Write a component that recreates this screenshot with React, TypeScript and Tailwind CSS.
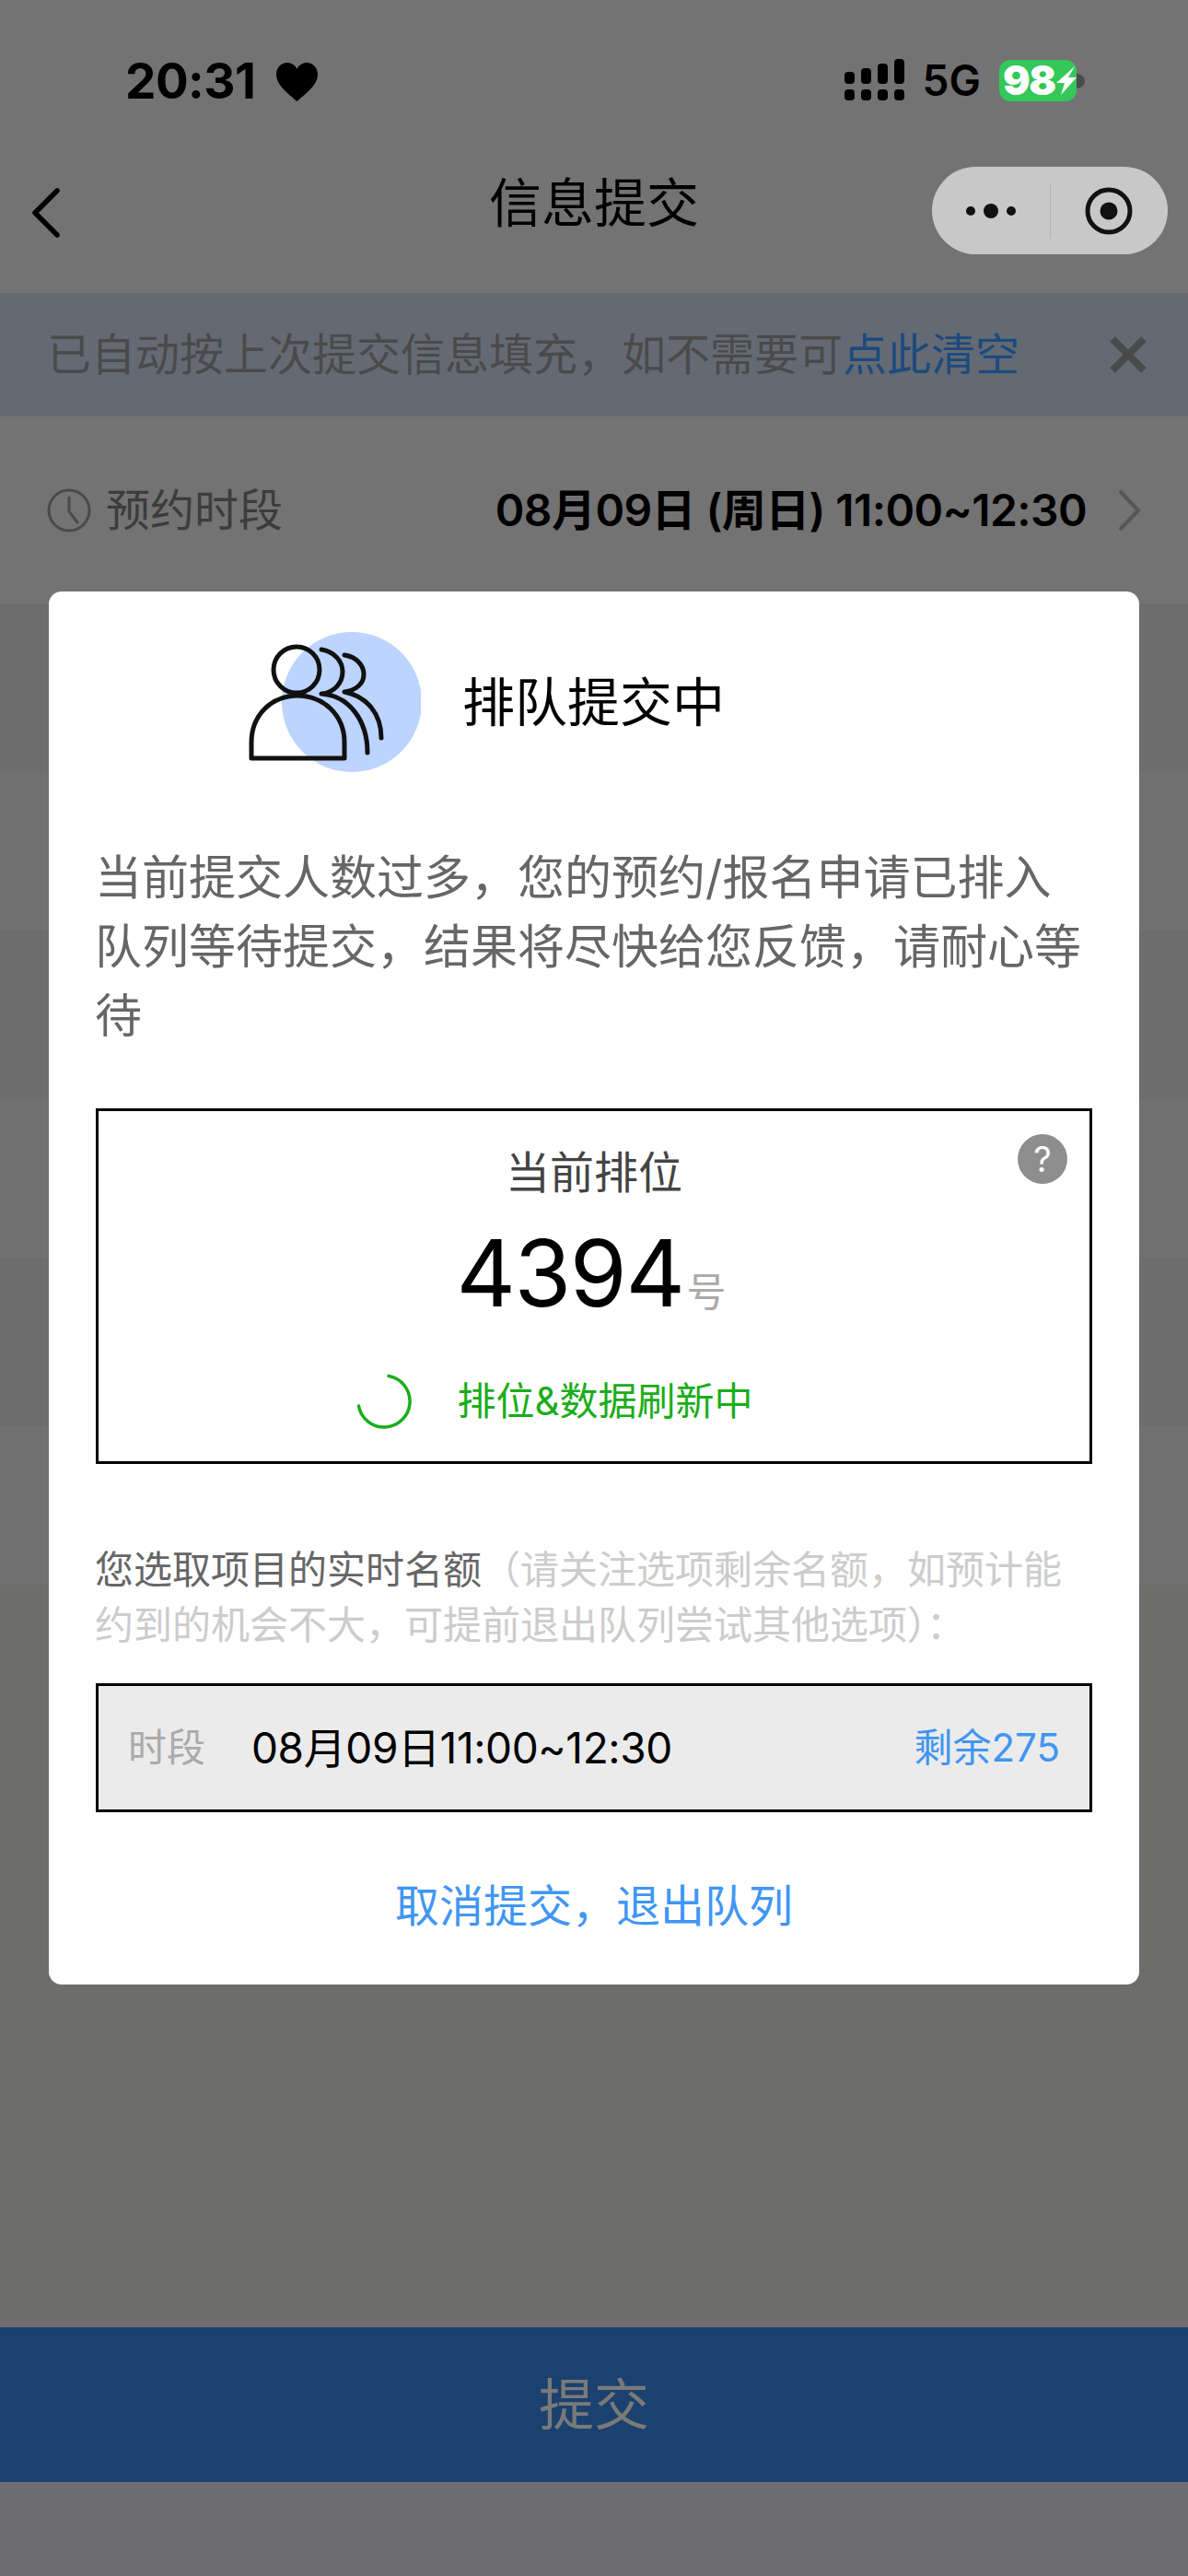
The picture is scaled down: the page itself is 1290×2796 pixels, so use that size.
const sans = "font-['Inter','Noto_Sans_CJK_SC',sans-serif]";

function Heart() {
  return (
    <svg width="47" height="43" viewBox="0 0 48 44" className="ml-[22px] mt-[4px]">
      <path d="M24 43 C14 34 1 25 1 13 C1 5 7 0 13 0 C18 0 22 3 24 7 C26 3 30 0 35 0 C41 0 47 5 47 13 C47 25 34 34 24 43 Z" fill="#000" />
    </svg>
  );
}

function Signal() {
  return (
    <svg width="66" height="46" viewBox="0 0 66 46">
      <rect x="0" y="14" width="11" height="13" rx="4" fill="#000" />
      <rect x="18" y="10" width="11" height="17" rx="4" fill="#000" />
      <rect x="36" y="5" width="11" height="22" rx="4" fill="#000" />
      <rect x="54" y="0" width="11" height="27" rx="4" fill="#000" />
      <rect x="0" y="33" width="11" height="12" rx="4" fill="#000" />
      <rect x="18" y="33" width="11" height="12" rx="4" fill="#000" />
      <rect x="36" y="33" width="11" height="12" rx="4" fill="#000" />
      <rect x="54" y="33" width="11" height="12" rx="4" fill="#000" />
    </svg>
  );
}

function Battery() {
  return (
    <div className="relative flex h-[45px] w-[84px] items-center rounded-[12px] bg-[#34c759] pl-[4px]">
      <span className="text-[44px] leading-none font-black tracking-[-1.5px] text-white">98</span>
      <svg width="22" height="31" viewBox="0 0 22 31" className="absolute right-0 top-[7px]">
        <path d="M20 0 L0 18 H9 L5 31 L22 12 H13 Z" fill="#fff" />
      </svg>
      <svg width="9" height="16" viewBox="0 0 9 16" className="absolute right-[-9px] top-[15px]">
        <path d="M0 0 C5 0 9 4 9 8 C9 12 5 16 0 16 Z" fill="#4a4a4a" />
      </svg>
    </div>
  );
}

function Clock() {
  return (
    <svg width="48" height="48" viewBox="0 0 48 48" fill="none" stroke="#4a4a4a" strokeWidth="3">
      <circle cx="24" cy="24" r="22" />
      <path d="M24 10 V25 L33 37" strokeLinecap="round" strokeLinejoin="round" />
    </svg>
  );
}

function People() {
  return (
    <svg width="190" height="160" viewBox="0 0 190 160" fill="none" className="shrink-0">
      <circle cx="115" cy="76" r="76" fill="#bcd4fe" />
      <g stroke="#111" strokeWidth="5" strokeLinecap="round" strokeLinejoin="round">
        <circle cx="55" cy="41" r="25" />
        <path d="M6 137 V120 C6 90 28 69 56 69 C84 69 107 90 107 120 V137 Z" />
        <path d="M82 19 C96 21 105 32 105 43 C105 55 96 66 82 67 C112 69 132 96 132 131" />
        <path d="M107 25 C120 27 128 36 128 46 C128 56 120 63 107 65 C131 70 147 88 147 115" />
      </g>
    </svg>
  );
}

function Spinner() {
  return (
    <svg width="62" height="62" viewBox="0 0 62 62" fill="none">
      <path d="M36 3.5 A28 28 0 1 1 3.5 36" stroke="#1aad19" strokeWidth="3.5" strokeLinecap="round" />
    </svg>
  );
}

export default function App() {
  return (
    <div className={`relative flex h-[2796px] w-[1290px] flex-col overflow-hidden bg-[#737373] ${sans}`}>
      <div className="flex h-[176px] shrink-0 items-start justify-between pl-[136px] pr-[121px] pt-[64px]">
        <div className="flex items-center">
          <span className="text-[53px] leading-[46px] font-bold tracking-[-0.5px] text-black">20:31</span>
          <Heart />
        </div>
        <div className="flex items-center">
          <Signal />
          <span className="ml-[19px] mr-[20px] text-[46px] leading-[46px] font-semibold text-black">5G</span>
          <Battery />
        </div>
      </div>

      <div className="relative flex h-[142px] shrink-0 items-start justify-center">
        <svg width="32" height="54" viewBox="0 0 32 54" fill="none" className="absolute left-[34px] top-[28px]">
          <path d="M28 3 L4 27 L28 51" stroke="#000" strokeWidth="5.5" strokeLinecap="round" strokeLinejoin="round" />
        </svg>
        <span className="mt-[10px] text-[57px] leading-[70px] text-black">信息提交</span>
        <div className="absolute left-[1012px] top-[5px] flex h-[95px] w-[256px] items-center rounded-[48px] bg-[#c8c8c8]">
          <svg width="56" height="20" viewBox="0 0 56 20" className="ml-[36px]">
            <circle cx="6" cy="10" r="5" fill="#111" />
            <circle cx="28" cy="10" r="8" fill="#111" />
            <circle cx="50" cy="10" r="5" fill="#111" />
          </svg>
          <div className="ml-[36px] h-[60px] w-[1px] bg-[#b0b0b0]" />
          <svg width="52" height="52" viewBox="0 0 52 52" className="ml-[37px]">
            <circle cx="26" cy="26" r="23" fill="none" stroke="#111" strokeWidth="5" />
            <circle cx="26" cy="26" r="9.5" fill="#111" />
          </svg>
        </div>
      </div>

      <div className="flex h-[134px] shrink-0 items-center justify-between bg-[#646a73] pl-[51px] pr-[44px]">
        <span className="text-[48px] leading-none text-[#4a4a4a]">
          已自动按上次提交信息填充，如不需要可<span className="text-[#1c4a7e]">点此清空</span>
        </span>
        <svg width="42" height="42" viewBox="0 0 42 42" fill="none">
          <path d="M4 4 L38 38 M38 4 L4 38" stroke="#4a4a4a" strokeWidth="8" />
        </svg>
      </div>

      <div className="flex h-[204px] shrink-0 items-center justify-between pl-[51px] pr-[50px]">
        <div className="flex items-center">
          <Clock />
          <span className="ml-[16px] text-[48px] leading-none text-[#3c3c3c]">预约时段</span>
        </div>
        <div className="flex items-center">
          <span className="text-[48px] leading-none font-semibold tracking-[-0.6px] text-black">08月09日 (周日) 11:00~12:30</span>
          <svg width="28" height="46" viewBox="0 0 28 46" fill="none" className="ml-[32px]">
            <path d="M4 2 L24 23 L4 44" stroke="#565656" strokeWidth="4" />
          </svg>
        </div>
      </div>

      <div className="h-[182px] shrink-0 bg-[#6d6d6d]" />
      <div className="h-[172px] shrink-0 bg-[#717171]" />
      <div className="h-[183px] shrink-0 bg-[#6d6d6d]" />
      <div className="h-[172px] shrink-0 bg-[#717171]" />
      <div className="h-[183px] shrink-0 bg-[#6d6d6d]" />
      <div className="h-[172px] shrink-0 bg-[#717171]" />

      <div className="flex-1 bg-[#6d6d6b]" />
      <div className="flex h-[168px] shrink-0 items-center justify-center bg-[#1b426f]">
        <span className="text-[60px] leading-none text-[#7a7a7a]">提交</span>
      </div>
      <div className="h-[102px] shrink-0 bg-[#6d6d6f]" />

      <div className="absolute left-[53px] top-[642px] flex h-[1512px] w-[1184px] flex-col rounded-[14px] bg-white px-[51px]">
        <div className="mt-[41px] flex h-[160px] items-center pl-[164px]">
          <div className="-ml-[1px] mr-[45px] mt-[6px]"><People /></div>
          <span className="-mt-[2px] text-[57px] leading-none text-black">排队提交中</span>
        </div>
        <p className="mt-[72px] -ml-[1px] text-[51px] leading-[75px] text-[#666]">
          当前提交人数过多，您的预约/报名申请已排入队列等待提交，结果将尽快给您反馈，请耐心等待
        </p>
        <div className="relative mt-[63px] flex h-[386px] flex-col items-center border-[3px] border-black">
          <div className="absolute right-[24px] top-[25px] flex h-[54px] w-[54px] items-center justify-center rounded-full bg-[#8e8e8e] text-[38px] text-white">?</div>
          <span className="mt-[37px] text-[48px] leading-[60px] text-[#444]">当前排位</span>
          <div className="mt-[24px] flex items-baseline pr-[6px]">
            <span className="text-[100px] leading-[110px] tracking-[-1.5px] text-black">4394</span>
            <span className="ml-[3px] text-[43px] leading-none text-[#aaa]">号</span>
          </div>
          <div className="mt-[53px] flex items-center pr-[86px]">
            <Spinner />
            <span className="ml-[48px] text-[42px] leading-none text-[#1aad19]">排位&数据刷新中</span>
          </div>
        </div>
        <p className="mt-[85px] -ml-[1px] text-[42px] leading-[60px] text-[#666]">
          您选取项目的实时名额<span className="text-[#ccc]">（请关注选项剩余名额，如预计能约到的机会不大，可提前退出队列尝试其他选项）：</span>
        </p>
        <div className="mt-[33px] flex h-[140px] items-start justify-between border-[3px] border-black bg-[#ebebeb] pl-[32px] pr-[32px] pt-[44px]">
          <div className="flex items-center">
            <span className="w-[134px] text-[42px] leading-[46px] text-[#aaa]">时段</span>
            <span className="text-[46px] leading-[46px] tracking-[-0.4px] text-black">08月09日11:00~12:30</span>
          </div>
          <span className="text-[42px] leading-[46px] text-[#4096f3]">剩余275</span>
        </div>
        <div className="mt-[72px] text-center text-[48px] leading-[60px] text-[#4096f3]">取消提交，退出队列</div>
      </div>
    </div>
  );
}
